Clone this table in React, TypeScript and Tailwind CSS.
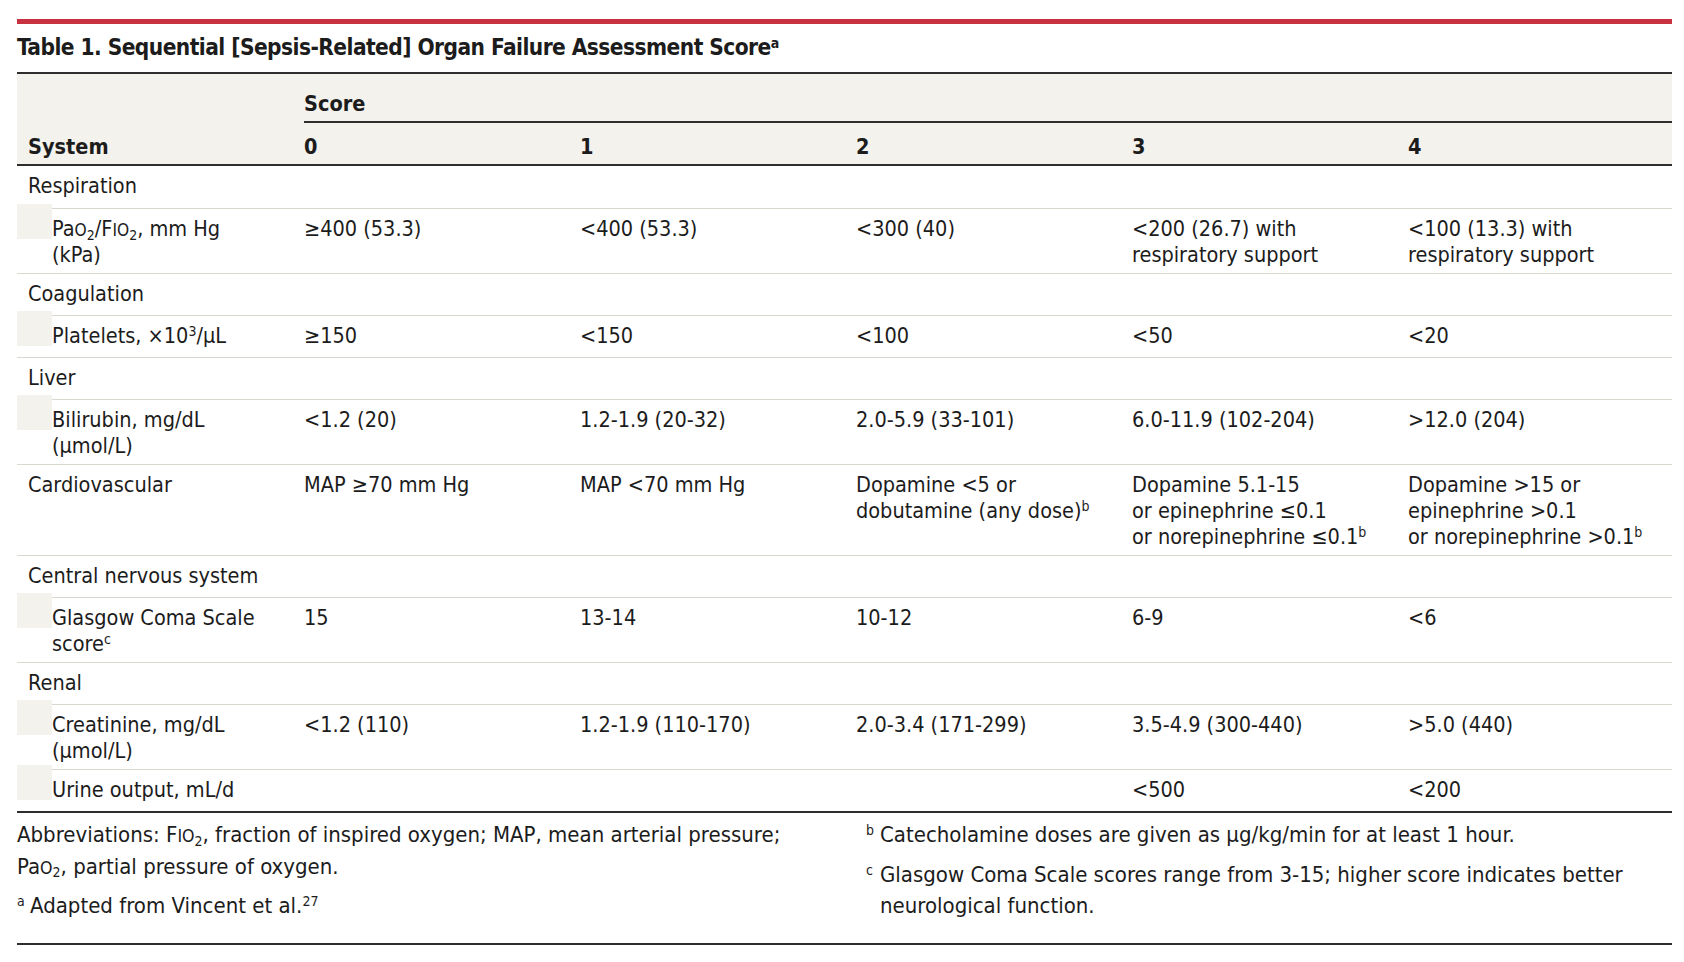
import React from "react";

/* SOFA score table (JAMA style) */

const font = "font-['DejaVu_Sans_Condensed','Liberation_Sans',Arial,sans-serif]";
const cols = "grid grid-cols-[287px_276px_276px_276px_276px_1fr]";
const subCols = "grid grid-cols-[252px_276px_276px_276px_276px_1fr]";
const cell = "pt-[7px] pb-[5px]";

function Sc({ children }: { children: React.ReactNode }) {
  return <span className="text-[0.8em] leading-none">{children}</span>;
}

function Sub({ children }: { children: React.ReactNode }) {
  return <sub className="text-[14px]">{children}</sub>;
}

function Sup({ children }: { children: React.ReactNode }) {
  return <sup className="text-[14px]">{children}</sup>;
}

type Row = {
  kind: "group" | "sub";
  label: React.ReactNode;
  values?: React.ReactNode[];
};

const rows: Row[] = [
  { kind: "group", label: "Respiration" },
  {
    kind: "sub",
    label: (
      <>
        Pa<Sc>O</Sc>
        <Sub>2</Sub>/F<Sc>IO</Sc>
        <Sub>2</Sub>, mm Hg
        <br />
        (kPa)
      </>
    ),
    values: [
      "≥400 (53.3)",
      "<400 (53.3)",
      "<300 (40)",
      <>
        &lt;200 (26.7) with
        <br />
        respiratory support
      </>,
      <>
        &lt;100 (13.3) with
        <br />
        respiratory support
      </>,
    ],
  },
  { kind: "group", label: "Coagulation" },
  {
    kind: "sub",
    label: (
      <>
        Platelets, ×10<Sup>3</Sup>/μL
      </>
    ),
    values: ["≥150", "<150", "<100", "<50", "<20"],
  },
  { kind: "group", label: "Liver" },
  {
    kind: "sub",
    label: (
      <>
        Bilirubin, mg/dL
        <br />
        (μmol/L)
      </>
    ),
    values: ["<1.2 (20)", "1.2-1.9 (20-32)", "2.0-5.9 (33-101)", "6.0-11.9 (102-204)", ">12.0 (204)"],
  },
  {
    kind: "group",
    label: "Cardiovascular",
    values: [
      "MAP ≥70 mm Hg",
      "MAP <70 mm Hg",
      <>
        Dopamine &lt;5 or
        <br />
        dobutamine (any dose)<Sup>b</Sup>
      </>,
      <>
        Dopamine 5.1-15
        <br />
        or epinephrine ≤0.1
        <br />
        or norepinephrine ≤0.1<Sup>b</Sup>
      </>,
      <>
        Dopamine &gt;15 or
        <br />
        epinephrine &gt;0.1
        <br />
        or norepinephrine &gt;0.1<Sup>b</Sup>
      </>,
    ],
  },
  { kind: "group", label: "Central nervous system" },
  {
    kind: "sub",
    label: (
      <>
        Glasgow Coma Scale
        <br />
        score<Sup>c</Sup>
      </>
    ),
    values: ["15", "13-14", "10-12", "6-9", "<6"],
  },
  { kind: "group", label: "Renal" },
  {
    kind: "sub",
    label: (
      <>
        Creatinine, mg/dL
        <br />
        (μmol/L)
      </>
    ),
    values: ["<1.2 (110)", "1.2-1.9 (110-170)", "2.0-3.4 (171-299)", "3.5-4.9 (300-440)", ">5.0 (440)"],
  },
  {
    kind: "sub",
    label: "Urine output, mL/d",
    values: ["", "", "", "<500", "<200"],
  },
];

function TableRow({ row, first }: { row: Row; first: boolean }) {
  const values = row.values ?? ["", "", "", "", ""];
  if (row.kind === "group") {
    return (
      <div className={`${cols} min-h-[42px] ${first ? "" : "border-t border-[#d9d9d2]"}`}>
        <div className={`pl-[11px] ${cell}`}>{row.label}</div>
        {values.map((v, i) => (
          <div key={i} className={cell}>
            {v}
          </div>
        ))}
      </div>
    );
  }
  return (
    <div className="flex">
      <div className="w-[35px] h-[35px] -mt-[4px] shrink-0 self-start bg-[#f3f2ed]" />
      <div className={`${subCols} flex-1 min-h-[42px] border-t border-[#d9d9d2]`}>
        <div className={cell}>{row.label}</div>
        {values.map((v, i) => (
          <div key={i} className={cell}>
            {v}
          </div>
        ))}
      </div>
    </div>
  );
}

export default function App() {
  return (
    <div className={`${font} min-h-screen bg-white pl-[17px] pr-[12px] text-[#1c1c1c]`}>
      <div className="pt-[19px]">
        <div className="h-[5px] bg-[#c8313f]" />
      </div>

      <h1 className="mt-[8px] mb-[10px] text-[22.5px] leading-[30px] font-bold tracking-[-0.55px]">
        Table 1. Sequential [Sepsis-Related] Organ Failure Assessment Score
        <sup className="text-[14px] font-bold">a</sup>
      </h1>

      <div className="text-[21.5px] leading-[26px]">
        {/* header */}
        <div className="bg-[#f3f2ed] border-t-2 border-b-2 border-[#2e2e2e] font-bold">
          <div className={cols}>
            <div />
            <div className="col-span-5 border-b-2 border-[#2e2e2e] pt-[17px] pb-[4px]">Score</div>
          </div>
          <div className={cols}>
            <div className="pl-[11px] pt-[11px] pb-[4px]">System</div>
            {["0", "1", "2", "3", "4"].map((n) => (
              <div key={n} className="pt-[11px] pb-[4px]">
                {n}
              </div>
            ))}
          </div>
        </div>

        {/* body */}
        <div className="border-b-2 border-[#2e2e2e]">
          {rows.map((r, i) => (
            <TableRow key={i} row={r} first={i === 0} />
          ))}
        </div>
      </div>

      {/* footnotes */}
      <div className="grid grid-cols-[849px_1fr] border-b-2 border-[#2e2e2e] pt-[6px] pb-[21px] text-[22px] leading-[31.5px]">
        <div>
          <p className="mb-[8px]">
            Abbreviations: F<Sc>IO</Sc>
            <Sub>2</Sub>, fraction of inspired oxygen; MAP, mean arterial pressure;
            <br />
            Pa<Sc>O</Sc>
            <Sub>2</Sub>, partial pressure of oxygen.
          </p>
          <p className="flex">
            <span className="w-[13px] shrink-0">
              <Sup>a</Sup>
            </span>
            <span>
              Adapted from Vincent et al.<Sup>27</Sup>
            </span>
          </p>
        </div>
        <div>
          <p className="mb-[8px] flex">
            <span className="w-[14px] shrink-0">
              <Sup>b</Sup>
            </span>
            <span>Catecholamine doses are given as μg/kg/min for at least 1 hour.</span>
          </p>
          <p className="flex">
            <span className="w-[14px] shrink-0">
              <Sup>c</Sup>
            </span>
            <span>
              Glasgow Coma Scale scores range from 3-15; higher score indicates better
              <br />
              neurological function.
            </span>
          </p>
        </div>
      </div>
    </div>
  );
}
